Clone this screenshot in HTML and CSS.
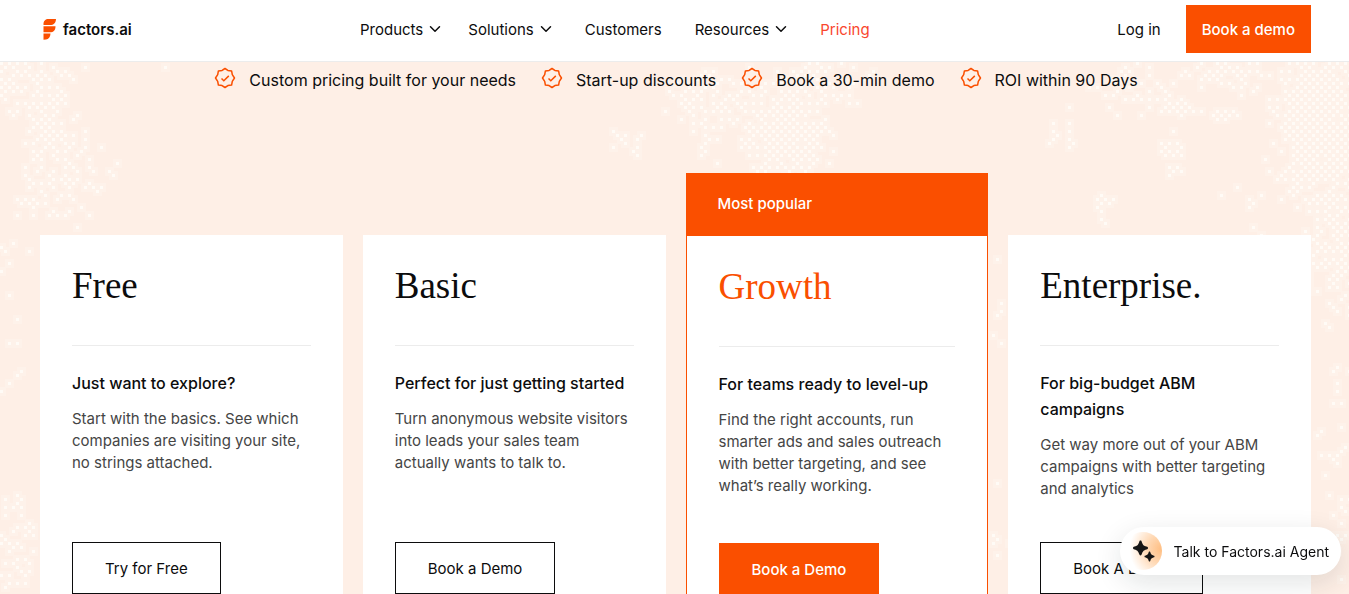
FILE: index.html
```html
<!DOCTYPE html>
<html lang="en">
<head>
    <meta charset="utf-8">
    <meta name="viewport" content="width=device-width, initial-scale=1">
    <title>Pricing | Factors.ai</title>
    <link rel="stylesheet" href="styles.css">
</head>
<body>
    <svg class="sprite" aria-hidden="true">
        <symbol id="icon-chevron" viewBox="0 0 12 8">
            <path d="M1.5 1.8 6 6.2l4.500-4.400" fill="none" stroke="currentColor" stroke-width="1.5" stroke-linecap="round" stroke-linejoin="round"/>
        </symbol>
        <symbol id="icon-badge" viewBox="0 0 22 22">
            <path d="M11 1.500 13.900 3.400 17.600 3.900 18.300 7.700 20.500 11 18.300 14.300 17.600 18.100 13.900 18.600 11 20.500 8.100 18.600 4.400 18.100 3.700 14.300 1.500 11 3.700 7.700 4.400 3.900 8.100 3.400Z" fill="none" stroke="currentColor" stroke-width="1.500" stroke-linejoin="round"/>
            <path d="m7.500 11.500 2.300 2.200 5-4.800" fill="none" stroke="currentColor" stroke-width="1.500"/>
        </symbol>
    </svg>

    <header class="navbar">
        <a class="brand" href="#">
            <svg width="13" height="21" viewBox="0 0 13 21" aria-hidden="true">
                <path d="M5.500 0H13c-.2 4-2.200 6-6 6H.5V5c0-3 2-5 5-5zM.5 7.300h12c0 4-2 6-5.500 6H.5zM.5 14.400h7c0 3.500-2 5.600-4.500 6.200l-2.500.2z" fill="#fa4f00"/>
            </svg>
            <span>factors.ai</span>
        </a>
        <nav class="menu">
            <button type="button">Products <svg width="12" height="8"><use href="#icon-chevron"/></svg></button>
            <button type="button">Solutions <svg width="12" height="8"><use href="#icon-chevron"/></svg></button>
            <a href="#">Customers</a>
            <button type="button">Resources <svg width="12" height="8"><use href="#icon-chevron"/></svg></button>
            <a class="active" href="#">Pricing</a>
        </nav>
        <div class="actions">
            <a href="#">Log in</a>
            <button class="btn-demo" type="button">Book a demo</button>
        </div>
    </header>

    <main class="pricing">
        <svg class="texture" id="texture" viewBox="0 0 1349 532" preserveAspectRatio="xMidYMin slice" aria-hidden="true"></svg>

        <ul class="perks">
            <li><svg width="22" height="22"><use href="#icon-badge"/></svg>Custom pricing built for your needs</li>
            <li><svg width="22" height="22"><use href="#icon-badge"/></svg>Start-up discounts</li>
            <li><svg width="22" height="22"><use href="#icon-badge"/></svg>Book a 30-min demo</li>
            <li><svg width="22" height="22"><use href="#icon-badge"/></svg>ROI within 90 Days</li>
        </ul>

        <div class="plans">
            <section class="plan">
                <div class="plan-body">
                    <h2>Free</h2>
                    <div class="plan-copy">
                        <h3>Just want to explore?</h3>
                        <p>Start with the basics. See which companies are visiting your site, no strings attached.</p>
                    </div>
                    <button class="btn" type="button">Try for Free</button>
                </div>
            </section>
            <section class="plan">
                <div class="plan-body">
                    <h2>Basic</h2>
                    <div class="plan-copy">
                        <h3>Perfect for just getting started</h3>
                        <p>Turn anonymous website visitors into leads your sales team actually wants to talk to.</p>
                    </div>
                    <button class="btn" type="button">Book a Demo</button>
                </div>
            </section>
            <section class="plan popular">
                <div class="plan-label">Most popular</div>
                <div class="plan-body">
                    <h2>Growth</h2>
                    <div class="plan-copy">
                        <h3>For teams ready to level-up</h3>
                        <p>Find the right accounts, run smarter ads and sales outreach with better targeting, and see what’s really working.</p>
                    </div>
                    <button class="btn btn-filled" type="button">Book a Demo</button>
                </div>
            </section>
            <section class="plan">
                <div class="plan-body">
                    <h2>Enterprise.</h2>
                    <div class="plan-copy">
                        <h3>For big-budget ABM campaigns</h3>
                        <p>Get way more out of your ABM campaigns with better targeting and analytics</p>
                    </div>
                    <button class="btn" type="button">Book A Demo</button>
                </div>
            </section>
        </div>
    </main>

    <button class="agent" type="button">
        <span class="agent-icon">
            <svg width="24" height="24" viewBox="0 0 24 24" aria-hidden="true">
                <path d="M9.500 1.500c.8 0 1 .5 1.300 1.400 1 3 1.800 3.800 4.700 4.700 1 .3 1.500.6 1.500 1.400s-.5 1.100-1.500 1.400c-2.900.9-3.700 1.700-4.700 4.700-.3.900-.5 1.400-1.300 1.400s-1-.5-1.300-1.400c-1-3-1.800-3.800-4.700-4.700-1-.3-1.500-.6-1.500-1.400s.5-1.100 1.500-1.400c2.900-.9 3.700-1.700 4.700-4.700.3-.9.500-1.400 1.300-1.400z" fill="#151515"/>
                <path d="M18.500 12.500c.6 0 .7.400.9 1 .6 1.900 1.200 2.400 3 3 .6.200 1.100.4 1.100 1s-.5.8-1.100 1c-1.800.6-2.400 1.100-3 3-.2.600-.3 1-.9 1s-.7-.4-.9-1c-.6-1.900-1.200-2.400-3-3-.6-.2-1.100-.4-1.100-1s.5-.8 1.100-1c1.800-.6 2.400-1.100 3-3 .2-.6.300-1 .9-1z" fill="#151515"/>
            </svg>
        </span>
        Talk to Factors.ai Agent
    </button>

    <script src="texture.js"></script>
</body>
</html>
```
FILE: styles.css
```css
* {
    box-sizing: border-box;
}

body {
    height: 100vh;
    margin: 0;
    overflow: hidden;
    display: flex;
    flex-direction: column;
    background: #feefe6;
    color: #0c0c0d;
    font-family: Inter, "Liberation Sans", sans-serif;
    font-size: 15px;
}

a {
    color: inherit;
    text-decoration: none;
}

button {
    border: 0;
    background: none;
    color: inherit;
    font: inherit;
    cursor: pointer;
}

.sprite {
    display: none;
}

/* top bar */

.navbar {
    flex: none;
    display: flex;
    align-items: center;
    height: 62px;
    padding: 0 38px 3px 40px;
    border-bottom: 1px solid #ececec;
    background: #fff;
}

.brand {
    flex: none;
    display: flex;
    align-items: center;
    gap: 7px;
    width: 320px;
    padding-left: 3px;
    font-size: 15px;
    font-weight: 600;
}

.menu {
    display: flex;
    align-items: center;
    gap: 33px;
}

.menu button {
    display: flex;
    align-items: center;
    gap: 6px;
    padding: 0;
}

.menu button + button {
    margin-left: -6px;
}

.menu .active {
    color: #f9462d;
}

.actions {
    display: flex;
    align-items: center;
    gap: 25px;
    margin-left: auto;
}

.btn-demo {
    height: 48px;
    padding: 0 16px;
    background: #fa4f00;
    color: #fff;
    font-weight: 500;
}

/* pricing */

.pricing {
    position: relative;
    flex: 1;
    min-height: 0;
    overflow: hidden;
}

.texture {
    position: absolute;
    inset: 0;
    width: 100%;
    height: 100%;
    fill: #fffcf9;
}

.perks {
    position: relative;
    display: flex;
    justify-content: center;
    gap: 25px;
    margin: 0;
    padding: 5px 0 0 3px;
    list-style: none;
    font-size: 16px;
    line-height: 26px;
}

.perks li {
    display: flex;
    gap: 13px;
}

.perks svg {
    color: #fa4f00;
}

.plans {
    position: relative;
    display: grid;
    grid-template-columns: repeat(4, 1fr);
    gap: 20px;
    padding: 80px 38px 0 40px;
}

.plan {
    display: flex;
    flex-direction: column;
    margin-top: 62px;
    background: #fff;
}

.plan.popular {
    margin-top: 0;
    border: 1px solid #fa4f00;
}

.plan-label {
    height: 62px;
    padding: 0 31px;
    background: #fa4f00;
    color: #fff;
    font-weight: 500;
    line-height: 60px;
}

.plan-body {
    padding: 32px;
}

.plan h2 {
    margin: 0 0 24px;
    padding-bottom: 40px;
    border-bottom: 1px solid #ececec;
    font-family: "Liberation Serif", serif;
    font-size: 37px;
    font-weight: 400;
    line-height: 38px;
}

.popular h2 {
    color: #fa4f00;
}

.plan-copy {
    min-height: 172px;
}

.plan h3 {
    margin: 0 0 12px;
    font-size: 16px;
    font-weight: 500;
    line-height: 26px;
}

.plan p {
    margin: 0;
    color: #454545;
    line-height: 22px;
}

.btn {
    height: 52px;
    padding: 0 32px;
    border: 1px solid #0c0c0d;
}

.btn-filled {
    border-color: #fa4f00;
    background: #fa4f00;
    color: #fff;
    font-weight: 500;
}

/* chat launcher */

.agent {
    position: fixed;
    right: 8px;
    bottom: 19px;
    display: flex;
    align-items: center;
    gap: 12px;
    height: 48px;
    padding: 0 12px 0 4px;
    border-radius: 24px;
    background: #fff;
    box-shadow: 0 8px 28px rgba(20, 30, 30, .12);
    font-size: 14px;
}

.agent-icon {
    display: flex;
    align-items: center;
    justify-content: center;
    width: 38px;
    height: 38px;
    border-radius: 50%;
    background: radial-gradient(circle at 100% 45%, #ffbd80 0, #ffd9b5 35%, #fff 75%);
}
```
FILE: texture.js
```js
// Scattered light dots behind the pricing cards.
// Each cloud: centre x, centre y, radius x, radius y, density
var clouds = [
    [12, 12, 75, 50, .5],
    [48, 60, 30, 60, .6],
    [55, 115, 55, 60, .4],
    [112, 108, 12, 14, .5],
    [160, 6, 12, 6, .5],
    [5, 205, 30, 60, .1],
    [5, 295, 25, 45, .1],
    [10, 475, 25, 60, .4],
    [628, 78, 24, 18, .4],
    [725, 35, 70, 35, .5],
    [785, 70, 55, 60, .8],
    [705, 80, 30, 35, .3],
    [820, 20, 60, 40, .4],
    [1060, 65, 28, 28, .2],
    [1100, 145, 18, 22, .4],
    [1135, 20, 60, 35, .3],
    [1175, 42, 22, 14, .8],
    [1215, 50, 28, 12, .6],
    [1172, 95, 16, 45, .4],
    [1230, 10, 80, 25, .4],
    [1320, 60, 60, 110, .8],
    [1335, 170, 40, 100, .6],
    [1270, 130, 60, 45, .1],
    [998, 250, 12, 100, .1],
    [998, 470, 12, 60, .2],
    [1335, 400, 20, 130, .2]
];

var seed = 11;
function random() {
    seed = (seed * 16807) % 2147483647;
    return seed / 2147483647;
}

// small dots, plus a faint haze of larger blocks where the cloud is dense
var dots = '';
var haze = '';
for (var y = 0; y < 532; y += 4) {
    for (var x = (y % 8); x < 1349; x += 8) {
        var chance = 0;
        for (var i = 0; i < clouds.length; i++) {
            var c = clouds[i];
            var dx = (x - c[0]) / c[2];
            var dy = (y - c[1]) / c[3];
            chance = Math.max(chance, c[4] * (1 - dx * dx - dy * dy));
        }
        if (random() < chance * 1.3) {
            dots += 'M' + x + ' ' + y + 'h3v3h-3z';
            haze += 'M' + (x - 3) + ' ' + (y - 3) + 'h9v9h-9z';
        }
    }
}

function addPath(d, opacity) {
    var path = document.createElementNS('http://www.w3.org/2000/svg', 'path');
    path.setAttribute('d', d);
    path.setAttribute('opacity', opacity);
    document.getElementById('texture').appendChild(path);
}
addPath(haze, .25);
addPath(dots, .8);
```
